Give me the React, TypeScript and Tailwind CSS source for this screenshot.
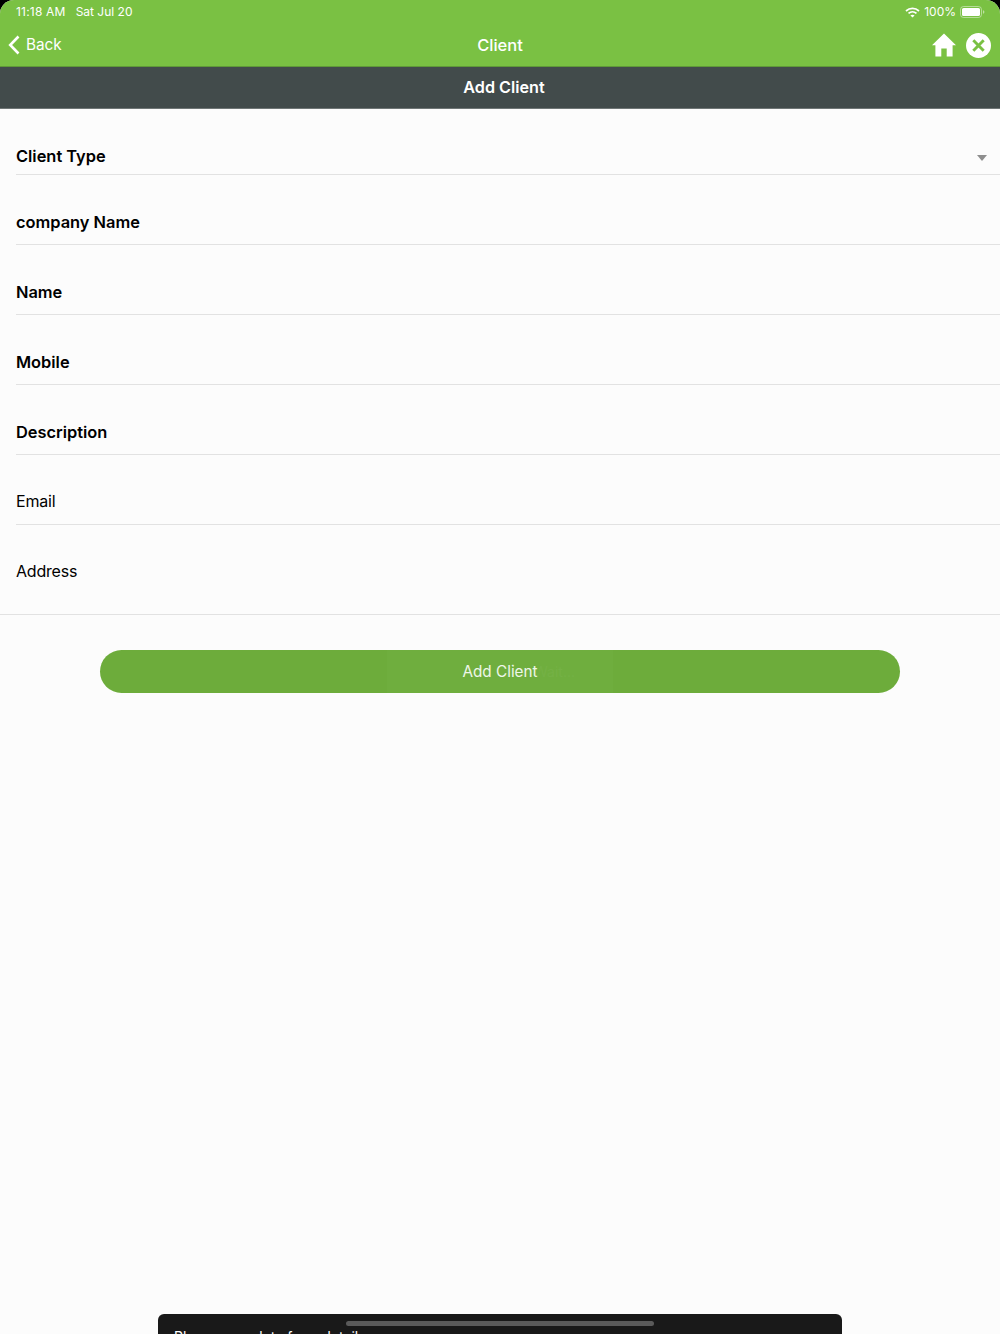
import React from "react";

function Row({ label, bold = true, h = "h-[70px]", pb = "pb-[11px]" }: { label: string; bold?: boolean; h?: string; pb?: string }) {
  return (
    <div className={`${h} ml-4 border-b border-[#e2e2e2] flex items-end ${pb}`}>
      <span className={`leading-[22px] text-black ${bold ? "text-[16.4px] font-semibold" : "text-[16px] tracking-[-0.2px] font-normal"}`}>{label}</span>
    </div>
  );
}

export default function App() {
  return (
    <div className="relative h-[1334px] w-[1000px] overflow-hidden bg-black font-['Inter','Liberation_Sans',sans-serif]">
      <div className="h-full rounded-t-[14px] overflow-hidden bg-[#fcfcfc] flex flex-col">
        <div className="h-[67px] bg-[#7ac143] border-b border-[#5f9a38] flex flex-col shrink-0 text-white">
          <div className="h-6 flex items-center justify-between pl-4 pr-[15px] text-[12px] leading-none">
            <div className="flex gap-[10px]">
              <span className="tracking-[0.2px]">11:18 AM</span>
              <span>Sat Jul 20</span>
            </div>
            <div className="flex items-center gap-[4px]">
              <svg width="15" height="11" viewBox="0 0 15 11" fill="none" stroke="white" strokeWidth="1.7" strokeLinecap="butt">
                <path d="M1 4 C4.8 .6 10.2 .6 14 4" />
                <path d="M3.5 6.3 C5.8 4.3 9.2 4.3 11.5 6.3" />
                <path d="M7.5 10.6 L5.4 8.4 C6.6 7.4 8.4 7.4 9.6 8.4 Z" fill="white" stroke="none" />
              </svg>
              <span>100%</span>
              <svg width="25" height="12" viewBox="0 0 25 12">
                <rect x=".5" y=".5" width="21" height="11" rx="3" fill="none" stroke="white" strokeOpacity=".45" />
                <rect x="2" y="2" width="18" height="8" rx="1.6" fill="white" />
                <path d="M23 4.2 C24 4.5 24.4 5.2 24.4 6 C24.4 6.8 24 7.5 23 7.8 Z" fill="white" fillOpacity=".5" />
              </svg>
            </div>
          </div>
          <div className="flex-1 flex items-center justify-between pl-2 pr-[9px] relative">
            <div className="flex items-center gap-[6px]">
              <svg width="12" height="20" viewBox="0 0 12 20" fill="none" stroke="white" strokeWidth="2.6">
                <path d="M10.5 1.5 L2.2 10 L10.5 18.5" />
              </svg>
              <span className="text-[15.3px] leading-[22px]">Back</span>
            </div>
            <span className="absolute left-0 right-0 top-[10px] text-center text-[16.5px] leading-[22px] font-medium">Client</span>
            <div className="flex items-center gap-[10px]">
              <svg width="24" height="24" viewBox="0 0 24 24" fill="white">
                <path d="M12 0.5 L24 12.2 L20.6 12.2 L20.6 23.5 L14.7 23.5 L14.7 15.5 L9.3 15.5 L9.3 23.5 L3.4 23.5 L3.4 12.2 L0 12.2 Z" />
              </svg>
              <svg width="25" height="25" viewBox="0 0 25 25">
                <circle cx="12.5" cy="12.5" r="12.5" fill="white" />
                <path d="M7.3 7.3 L17.7 17.7 M17.7 7.3 L7.3 17.7" stroke="#7ac143" strokeWidth="2.9" />
              </svg>
            </div>
          </div>
        </div>

        <div className="h-[42px] bg-[#424b4b] border-b border-[#6f7676] shrink-0 flex items-center justify-center pl-2 pb-[1px]">
          <span className="text-white text-[16.2px] font-semibold leading-[22px]">Add Client</span>
        </div>

        <div className="flex flex-col">
          <div className="relative">
            <Row label="Client Type" h="h-[66px]" pb="pb-[7px]" />
            <svg width="10" height="6" viewBox="0 0 10 6" className="absolute right-[13px] bottom-[14px]">
              <path d="M0 0 H10 L5 6 Z" fill="#8e8e8e" />
            </svg>
          </div>
          <Row label="company Name" />
          <Row label="Name" />
          <Row label="Mobile" />
          <Row label="Description" />
          <Row label="Email" bold={false} pb="pb-[12px]" />
          <div className="h-[90px] border-b border-[#e2e2e2] pl-4 pt-[35px]">
            <span className="block text-[16px] tracking-[-0.2px] leading-[22px] text-black">Address</span>
          </div>
        </div>

        <div className="relative mt-[35px] mx-[100px] h-[43px] rounded-full bg-[#6dac3b] flex items-center justify-center overflow-hidden">
          <div className="absolute left-[287px] w-[226px] top-0 bottom-0 bg-[#6fae3e] flex items-center justify-end pr-[38px]">
            <span className="text-[14px] text-[#74b145]">Wait...</span>
          </div>
          <span className="relative text-[15.3px] text-[#eef6e8] leading-[22px]">Add Client</span>
        </div>
      </div>

      <div className="absolute left-[158px] top-[1314px] w-[684px] h-11 rounded-[6px] bg-[#191919] overflow-hidden">
        <div className="absolute left-[188px] top-[7px] w-[308px] h-[5px] rounded-full bg-[#5a5a5a]" />
        <span className="absolute left-4 top-[13px] text-white text-[14px] leading-5">Please complete form details</span>
      </div>
    </div>
  );
}
